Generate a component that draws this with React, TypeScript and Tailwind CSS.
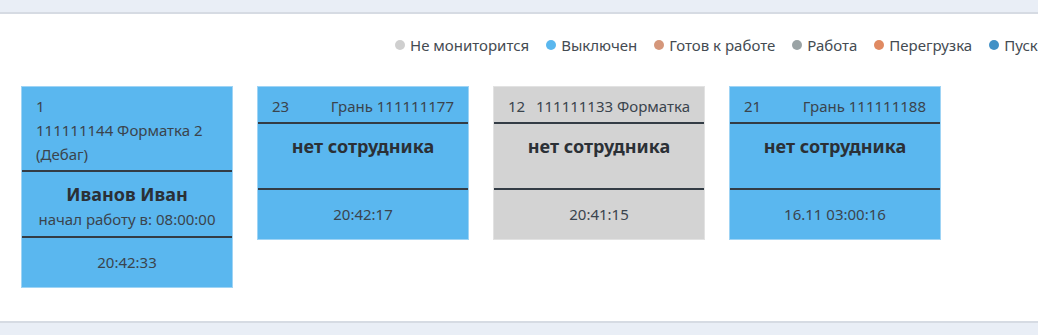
import React from 'react';

type Card = {
  color: 'blue' | 'gray';
  head: React.ReactNode;
  name: string;
  sub?: string;
  time: string;
};

const legend = [
  { label: 'Не мониторится', dot: 'bg-[#cfcfcf]' },
  { label: 'Выключен', dot: 'bg-[#5ab7ee]' },
  { label: 'Готов к работе', dot: 'bg-[#d5977b]' },
  { label: 'Работа', dot: 'bg-[#9aa3a5]' },
  { label: 'Перегрузка', dot: 'bg-[#e08a62]' },
  { label: 'Пуск', dot: 'bg-[#4191c6]' },
];

const cards: Card[] = [
  {
    color: 'blue',
    head: (
      <div>
        <div>1</div>
        <div>111111144 Форматка 2</div>
        <div>(Дебаг)</div>
      </div>
    ),
    name: 'Иванов Иван',
    sub: 'начал работу в: 08:00:00',
    time: '20:42:33',
  },
  {
    color: 'blue',
    head: (
      <div className="flex justify-between">
        <span>23</span>
        <span>Грань 111111177</span>
      </div>
    ),
    name: 'нет сотрудника',
    time: '20:42:17',
  },
  {
    color: 'gray',
    head: (
      <div className="flex justify-between">
        <span>12</span>
        <span>111111133 Форматка</span>
      </div>
    ),
    name: 'нет сотрудника',
    time: '20:41:15',
  },
  {
    color: 'blue',
    head: (
      <div className="flex justify-between">
        <span>21</span>
        <span>Грань 111111188</span>
      </div>
    ),
    name: 'нет сотрудника',
    time: '16.11 03:00:16',
  },
];

function MachineCard({ card }: { card: Card }) {
  const bg =
    card.color === 'blue'
      ? 'bg-[#5ab7ef] border-[#9fd4f5]'
      : 'bg-[#d3d3d3] border-[#e2e2e2]';
  return (
    <div className={`w-[212px] border ${bg} text-[#3a444d] text-[15px]`}>
      <div className="px-[14px] pt-[7px] pb-[4px] leading-[24px]">{card.head}</div>
      <div className="h-[2px] bg-[#333c45]" />
      <div className="text-center pt-[10px] pb-[4px]">
        <div className="text-[18px] font-bold leading-[24px] text-[#2b3036]">{card.name}</div>
        <div className="text-[15px] leading-[26px]">{card.sub ?? '\u00a0'}</div>
      </div>
      <div className="h-[2px] bg-[#333c45]" />
      <div className="h-[49px] flex items-center justify-center">{card.time}</div>
    </div>
  );
}

export default function App() {
  return (
    <div
      className="min-h-[335px] bg-[#e9eef6] pt-[12px]"
      style={{ fontFamily: '"Noto Sans", "Open Sans", sans-serif' }}
    >
      <div className="bg-white border-y-2 border-[#d6dbe3] h-[311px] overflow-hidden">
        <div className="flex items-center gap-[17px] pl-[395px] pt-[20px] whitespace-nowrap text-[15px] text-[#444b52]">
          {legend.map((l) => (
            <div key={l.label} className="flex items-center gap-[5px]">
              <span className={`w-[10px] h-[10px] rounded-full ${l.dot}`} />
              <span>{l.label}</span>
            </div>
          ))}
        </div>
        <div className="flex items-start gap-[24px] pl-[21px] pt-[29px]">
          {cards.map((c, i) => (
            <MachineCard key={i} card={c} />
          ))}
        </div>
      </div>
    </div>
  );
}
